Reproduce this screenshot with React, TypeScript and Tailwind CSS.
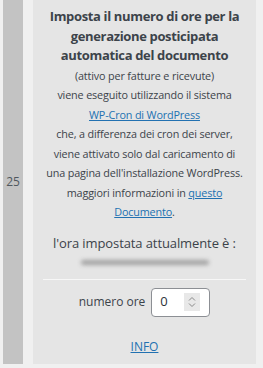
import React from "react";

export default function App() {
  const font = { fontFamily: '"Open Sans", "Noto Sans", sans-serif' } as React.CSSProperties;
  return (
    <div className="w-[263px] h-[368px] bg-[#f0f0f0] flex pl-[3px] text-[#3c434a]" style={font}>
      <div className="w-[20px] h-[364px] bg-[#c3c3c3] flex items-center justify-center text-[12px] text-[#50575e]">
        25
      </div>
      <div className="ml-[10px] w-[223px] h-[364px] bg-[#e5e5e5] flex flex-col items-center text-center">
        <div className="mt-[7px] text-[13px] font-bold leading-[19.5px] tracking-[-0.35px]">
          Imposta il numero di ore per la
          <br />
          generazione posticipata
          <br />
          automatica del documento
        </div>
        <div className="text-[10.8px] leading-[19.5px] tracking-[-0.15px]">
          (attivo per fatture e ricevute)
          <br />
          viene eseguito utilizzando il sistema
          <br />
          <a className="text-[#2271b1] underline">WP-Cron di WordPress</a>
          <br />
          che, a differenza dei cron dei server,
          <br />
          viene attivato solo dal caricamento di
          <br />
          una pagina dell'installazione WordPress.
          <br />
          maggiori informazioni in <a className="text-[#2271b1] underline">questo</a>
          <br />
          <a className="text-[#2271b1] underline">Documento</a>.
        </div>
        <div className="mt-[12px] text-[13px] leading-[19px] tracking-[-0.1px]">l'ora impostata attualmente è :</div>
        <div className="mt-[5px] h-[10px] w-[128px] flex items-center">
          <div className="h-[5px] w-full bg-[#a0a0a0] blur-[2px] rounded-full" />
        </div>
        <div className="mt-[11px] w-[203px] h-px bg-[#f7f7f7]" />
        <div className="mt-[8px] flex items-center gap-[6px] text-[12px]">
          <span>numero ore</span>
          <div className="w-[59px] h-[29px] bg-white border border-[#8c8f94] rounded-[4px] flex items-center pl-[8px] pr-[9px] justify-between">
            <span className="text-[13px] text-[#2c3338]">0</span>
            <div className="w-[16px] h-[18px] bg-[#e8e8e8] flex flex-col items-center justify-center gap-[2px]">
              <svg width="8" height="5" viewBox="0 0 8 5"><path d="M1 4.5 L4 1.5 L7 4.5" fill="none" stroke="#888" strokeWidth="1" /></svg>
              <svg width="8" height="5" viewBox="0 0 8 5"><path d="M1 0.5 L4 3.5 L7 0.5" fill="none" stroke="#888" strokeWidth="1" /></svg>
            </div>
          </div>
        </div>
        <a className="mt-[21px] text-[12px] text-[#2271b1] underline">INFO</a>
      </div>
    </div>
  );
}
